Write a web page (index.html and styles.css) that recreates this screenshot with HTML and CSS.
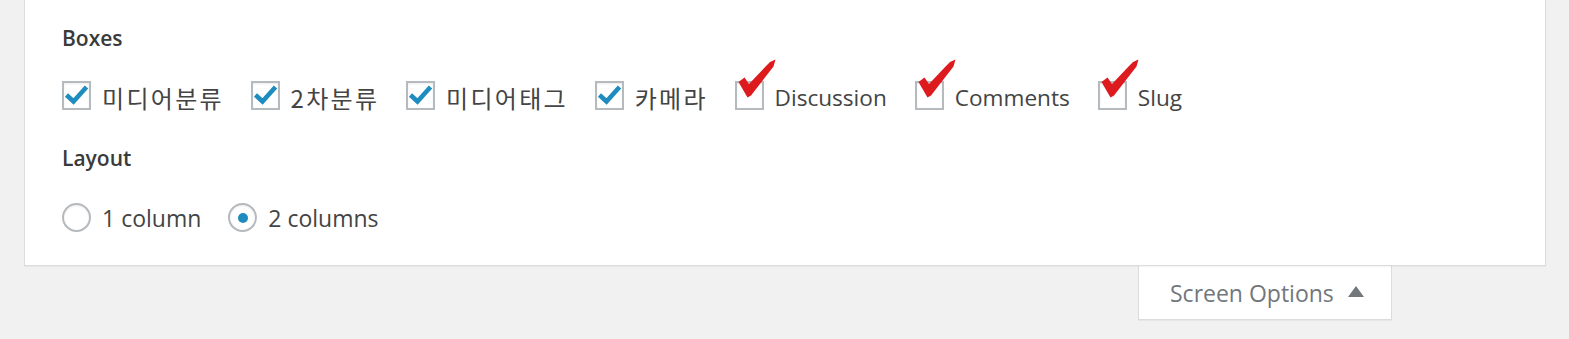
FILE: index.html
```html
<!DOCTYPE html>
<html lang="ko">
<head>
<meta charset="utf-8">
<title>Screen Options</title>
<link rel="stylesheet" href="styles.css">
</head>
<body>
<div class="panel">
  <div class="legend">Boxes</div>
  <div class="row">
    <label class="item"><span class="cb checked"><svg viewBox="0 0 29 29" class="tick"><path d="M4.5 14 L11.5 20.5 L24.5 6"/></svg></span><span class="ko">미디어분류</span></label>
    <label class="item"><span class="cb checked"><svg viewBox="0 0 29 29" class="tick"><path d="M4.5 14 L11.5 20.5 L24.5 6"/></svg></span><span class="ko">2차분류</span></label>
    <label class="item"><span class="cb checked"><svg viewBox="0 0 29 29" class="tick"><path d="M4.5 14 L11.5 20.5 L24.5 6"/></svg></span><span class="ko">미디어태그</span></label>
    <label class="item"><span class="cb checked"><svg viewBox="0 0 29 29" class="tick"><path d="M4.5 14 L11.5 20.5 L24.5 6"/></svg></span><span class="ko">카메라</span></label>
    <label class="item"><span class="cb"><svg viewBox="0 0 50 44" class="red"><path d="M10.5 25 L16.5 20.5 L21 27 L38.5 8.5 L42 5 L47.5 2.5 L45.5 9.5 L23 38.5 L19.5 40.5 Z"/></svg></span><span>Discussion</span></label>
    <label class="item"><span class="cb"><svg viewBox="0 0 50 44" class="red"><path d="M10.5 25 L16.5 20.5 L21 27 L38.5 8.5 L42 5 L47.5 2.5 L45.5 9.5 L23 38.5 L19.5 40.5 Z"/></svg></span><span>Comments</span></label>
    <label class="item"><span class="cb"><svg viewBox="0 0 50 44" class="red"><path d="M10.5 25 L16.5 20.5 L21 27 L38.5 8.5 L42 5 L47.5 2.5 L45.5 9.5 L23 38.5 L19.5 40.5 Z"/></svg></span><span>Slug</span></label>
  </div>
  <div class="legend legend2">Layout</div>
  <div class="row radios">
    <label class="item"><span class="radio"></span><span>1 column</span></label>
    <label class="item"><span class="radio on"></span><span>2 columns</span></label>
  </div>
</div>
<div class="tabbar">
  <button class="tab">Screen Options <span class="tri"></span></button>
</div>
</body>
</html>
```
FILE: styles.css
```css
html, body {
  margin: 0;
  padding: 0;
}
body {
  background: #f1f1f1;
  font-family: "Open Sans", "Noto Sans CJK KR", sans-serif;
  color: #444;
  width: 1569px;
  height: 339px;
  overflow: hidden;
}
.panel {
  margin-left: 24px;
  width: 1483px;
  height: 265px;
  background: #fff;
  border: 1px solid #dcdcdc;
  border-top: none;
  box-shadow: 0 1px 1px rgba(0,0,0,.04);
  padding-left: 37px;
  box-sizing: content-box;
  position: relative;
}
.legend {
  font-size: 21px;
  font-weight: 600;
  line-height: 28px;
  padding-top: 24px;
  color: #3a3a3a;
}
.legend2 {
  padding-top: 33px;
}
.row {
  display: flex;
  align-items: center;
  height: 28px;
  margin-top: 31px;
  font-size: 22.6px;
}
.radios {
  margin-top: 32px;
  font-size: 23px;
}
.item {
  display: flex;
  align-items: center;
  margin-right: 28px;
}
.radios .item {
  margin-right: 27px;
}
.cb {
  position: relative;
  width: 29px;
  height: 29px;
  box-sizing: border-box;
  border: 2px solid #b5babe;
  box-shadow: inset 0 1px 2px rgba(0,0,0,.08);
  margin-right: 11px;
  margin-top: -3px;
  background: #fff;
  flex: none;
  display: block;
}
.tick {
  position: absolute;
  left: -2px;
  top: -2px;
  width: 29px;
  height: 29px;
}
.tick path {
  fill: none;
  stroke: #1e8cbe;
  stroke-width: 4.6;
}
.red {
  position: absolute;
  left: -9px;
  top: -26px;
  width: 50px;
  height: 44px;
}
.red path {
  fill: #dd1b1e;
}
.ko {
  font-family: "Noto Sans CJK KR", sans-serif;
  font-size: 24px;
  letter-spacing: 2.3px;
  margin-right: -1.3px;
}
.radio {
  width: 29px;
  height: 29px;
  box-sizing: border-box;
  border: 2px solid #b5babe;
  box-shadow: inset 0 1px 2px rgba(0,0,0,.08);
  border-radius: 50%;
  margin-right: 11px;
  margin-top: -1px;
  flex: none;
  display: flex;
  align-items: center;
  justify-content: center;
}
.radio.on::after {
  content: "";
  width: 10px;
  height: 10px;
  border-radius: 50%;
  background: #1e8cbe;
}
.tabbar {
  display: flex;
  padding-left: 1138px;
}
.tab {
  width: 254px;
  height: 54px;
  box-sizing: border-box;
  background: #fff;
  border: 1px solid #dcdcdc;
  border-top: none;
  box-shadow: 0 1px 1px rgba(0,0,0,.04);
  font-family: "Open Sans", sans-serif;
  font-size: 23px;
  color: #72777c;
  padding: 0 0 0 31px;
  display: flex;
  align-items: center;
  margin: 0;
}
.tri {
  width: 0;
  height: 0;
  border-left: 8px solid transparent;
  border-right: 8px solid transparent;
  border-bottom: 11px solid #72777c;
  margin-left: 14px;
  margin-top: -2px;
}
```
